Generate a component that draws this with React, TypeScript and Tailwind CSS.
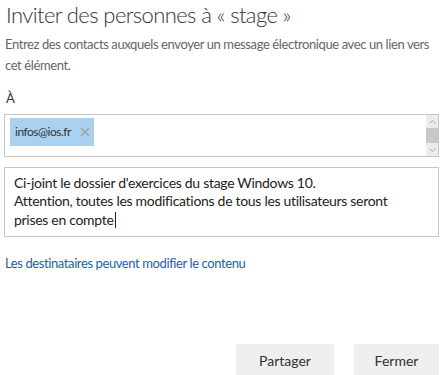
import { X } from 'lucide-react'

export default function App() {
  return (
    <div className="w-[441px] h-[375px] overflow-hidden bg-white font-['Segoe_UI','Lato',sans-serif] text-[#333]">
      <div className="pl-[4px] pr-[2px]">
        <h1 className="pl-[2px] text-[22px] leading-[30px] font-light tracking-[-0.6px] text-[#333]">
          Inviter des personnes à « stage »
        </h1>
        <p className="mt-[4px] pl-[1px] text-[13px] leading-[21px] tracking-[-0.4px] text-[#666]">
          Entrez des contacts auxquels envoyer un message électronique avec un lien vers cet élément.
        </p>

        <div className="mt-[13px] pl-[2px] text-[13px] leading-[18px] text-[#333]">À</div>

        <div className="mt-[7px] flex h-[43px] border border-[#c6c6c6] bg-white">
          <div className="flex-1 pl-[5px] pt-[3px]">
            <div className="inline-flex h-[28px] w-[84px] items-center gap-[7px] bg-[#aad1f0] pl-[5px]">
              <span className="text-[12px] tracking-[-0.5px] text-[#333]">infos@ios.fr</span>
              <X size={14} strokeWidth={3} className="text-[#a3a3a3]" />
            </div>
          </div>
          <div className="flex w-[12px] flex-col bg-[#ececec]">
            <div className="flex h-[13px] items-center justify-center text-[#a0a0a0]">
              <svg width="7" height="4" viewBox="0 0 7 4" fill="none" stroke="currentColor">
                <path d="M0.5 3.5 L3.5 0.5 L6.5 3.5" />
              </svg>
            </div>
            <div className="h-[15px] bg-[#c8c8c8]" />
            <div className="flex flex-1 items-center justify-center text-[#a0a0a0]">
              <svg width="7" height="4" viewBox="0 0 7 4" fill="none" stroke="currentColor">
                <path d="M0.5 0.5 L3.5 3.5 L6.5 0.5" />
              </svg>
            </div>
          </div>
        </div>

        <div className="mt-[10px] h-[70px] whitespace-nowrap border border-[#c6c6c6] px-[9px] pt-[6px] text-[14px] leading-[17.5px] tracking-[-0.3px] text-[#222]">
          <div>Ci-joint le dossier d'exercices du stage Windows 10.</div>
          <div>Attention, toutes les modifications de tous les utilisateurs seront</div>
          <div>
            prises en compte
            <span className="ml-[1px] inline-block h-[16px] w-[1px] translate-y-[3px] bg-[#222]" />
          </div>
        </div>

        <div className="mt-[17px] pl-[1px] text-[13px] leading-[18px] tracking-[-0.4px] text-[#1f5ea8]">
          Les destinataires peuvent modifier le contenu
        </div>

        <div className="mt-[72px] flex justify-end gap-[20px]">
          <button className="h-[32px] w-[98px] bg-[#efefef] text-[14px] text-[#333]">Partager</button>
          <button className="h-[32px] w-[85px] bg-[#efefef] text-[14px] text-[#333]">Fermer</button>
        </div>
      </div>
    </div>
  )
}
